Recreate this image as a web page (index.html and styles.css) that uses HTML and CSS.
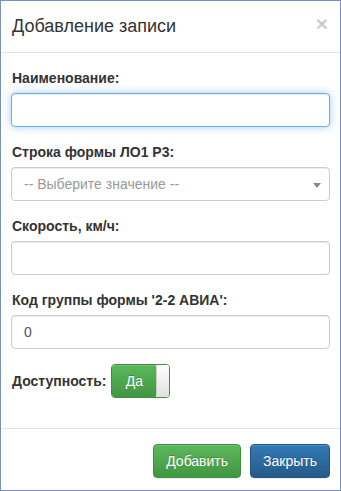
FILE: index.html
```
<!DOCTYPE html>
<html lang="ru">
<head>
  <meta charset="UTF-8" />
  <title>Добавление записи</title>
  <link rel="stylesheet" href="styles.css">
</head>
<body>

  <div class="modal">
    <!-- Header -->
    <div class="modal-header">
      <h4 class="modal-title">Добавление записи</h4>
      <span class="close">&times;</span>
    </div>

    <!-- Form -->
    <div class="modal-body">
      <div class="form-group">
        <label for="name">Наименование:</label>
        <input type="text" id="name" class="form-control focused">
      </div>

      <div class="form-group">
        <label>Строка формы ЛО1 Р3:</label>
        <div class="select-box">
          <span class="placeholder">-- Выберите значение --</span>
          <span class="arrow"></span>
        </div>
      </div>

      <div class="form-group">
        <label for="speed">Скорость, км/ч:</label>
        <input type="text" id="speed" class="form-control">
      </div>

      <div class="form-group">
        <label for="code">Код группы формы '2-2 АВИА':</label>
        <input type="text" id="code" class="form-control" value="0">
      </div>

      <div class="form-group inline">
        <label>Доступность:</label>
        <div class="toggle">
          <span class="toggle-on">Да</span>
          <span class="toggle-handle"></span>
        </div>
      </div>
    </div>

    <!-- Footer -->
    <div class="modal-footer">
      <button class="btn btn-success">Добавить</button>
      <button class="btn btn-primary">Закрыть</button>
    </div>
  </div>

</body>
</html>
```

FILE: styles.css
```
* {
  box-sizing: border-box;
}

body, html {
  margin: 0;
  padding: 0;
  background: #fff;
}

body {
  font-family: "Liberation Sans", Arial, sans-serif;
  font-size: 14px;
  line-height: 20px;
  color: #333;
}

.modal {
  width: 341px;
  height: 491px;
  border: 1px solid #7591c2;
  background: #fff;
  overflow: hidden;
}

.modal-header {
  display: flex;
  justify-content: space-between;
  align-items: center;
  padding: 15px 12px 16px 11px;
  border-bottom: 1px solid #e5e5e5;
}

.modal-title {
  margin: 0;
  font-size: 18px;
  font-weight: normal;
  line-height: 20px;
  color: #333;
}

.close {
  font-size: 21px;
  font-weight: bold;
  line-height: 1;
  color: #000;
  opacity: 0.2;
  margin-top: -6px;
}

.modal-body {
  padding: 15px 10px;
}

.form-group {
  margin-bottom: 15px;
}

.form-group label {
  display: inline-block;
  margin-bottom: 5px;
  padding-left: 1px;
  font-weight: bold;
}

.form-control {
  display: block;
  width: 100%;
  height: 34px;
  padding: 6px 12px;
  font-family: inherit;
  font-size: 14px;
  color: #555;
  background: #fff;
  border: 1px solid #ccc;
  border-radius: 4px;
  box-shadow: inset 0 1px 1px rgba(0, 0, 0, 0.075);
  outline: none;
}

.form-control.focused {
  border-color: #66afe9;
  box-shadow: inset 0 1px 1px rgba(0, 0, 0, 0.075), 0 0 8px rgba(102, 175, 233, 0.6);
}

.select-box {
  display: flex;
  justify-content: space-between;
  align-items: center;
  height: 34px;
  padding: 6px 8px 6px 12px;
  border: 1px solid #ccc;
  border-radius: 4px;
  box-shadow: inset 0 1px 1px rgba(0, 0, 0, 0.075);
}

.placeholder {
  color: #999;
}

.arrow {
  width: 0;
  height: 0;
  border-style: solid;
  border-width: 5px 4px 0 4px;
  border-color: #888 transparent transparent transparent;
  margin-top: 2px;
}

.form-group.inline {
  display: flex;
  align-items: center;
  gap: 5px;
}

.form-group.inline label {
  margin-bottom: 0;
}

.toggle {
  display: flex;
  width: 59px;
  height: 34px;
  border-radius: 4px;
  overflow: hidden;
  border: 1px solid #3e8f3e;
}

.toggle-on {
  flex: 1;
  display: flex;
  align-items: center;
  justify-content: center;
  color: #fff;
  background: linear-gradient(to bottom, #5cb85c 0, #419641 100%);
  text-shadow: 0 -1px 0 rgba(0, 0, 0, 0.2);
  box-shadow: inset 0 1px 0 rgba(255, 255, 255, 0.15);
}

.toggle-handle {
  width: 13px;
  background: linear-gradient(to bottom, #fff 0, #e0e0e0 100%);
  border-left: 1px solid #ccc;
  border-radius: 3px 0 0 3px;
}

.modal-footer {
  display: flex;
  justify-content: flex-end;
  gap: 9px;
  padding: 15px 10px 12px;
  border-top: 1px solid #e5e5e5;
}

.btn {
  height: 34px;
  padding: 6px 12px;
  font-family: inherit;
  font-size: 14px;
  line-height: 20px;
  color: #fff;
  border: 1px solid transparent;
  border-radius: 4px;
  text-shadow: 0 -1px 0 rgba(0, 0, 0, 0.2);
  box-shadow: inset 0 1px 0 rgba(255, 255, 255, 0.15), 0 1px 1px rgba(0, 0, 0, 0.075);
  cursor: pointer;
}

.btn-success {
  background: linear-gradient(to bottom, #5cb85c 0, #419641 100%);
  border-color: #3e8f3e;
}

.btn-primary {
  background: linear-gradient(to bottom, #337ab7 0, #265a88 100%);
  border-color: #245580;
}
```
